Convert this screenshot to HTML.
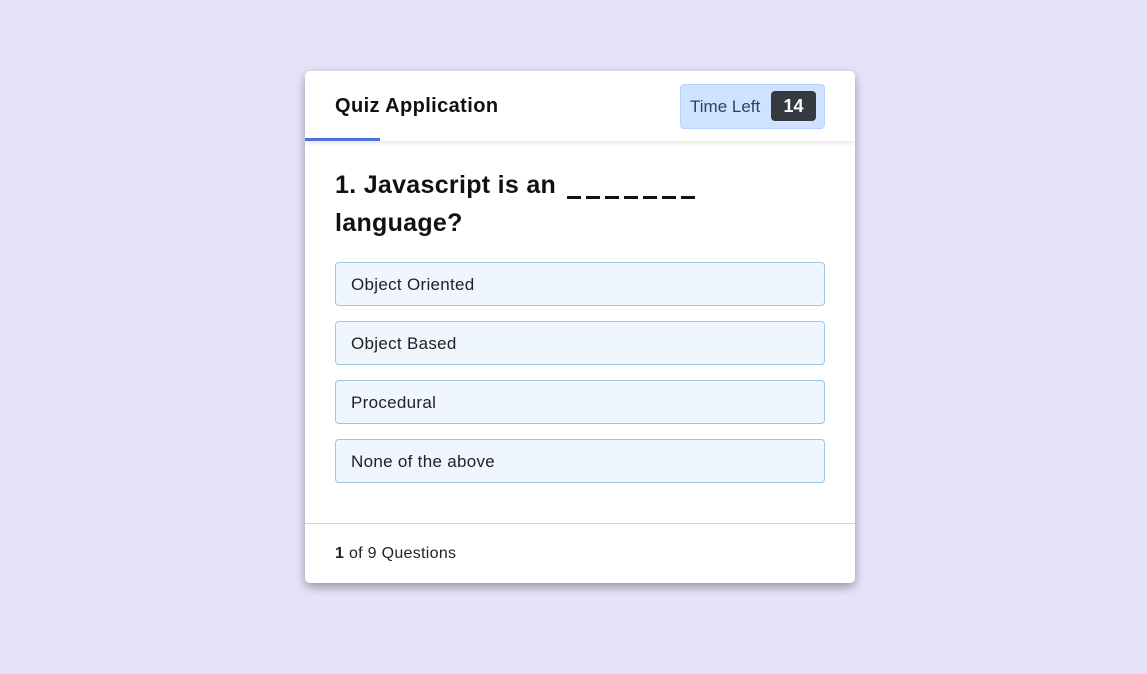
<!DOCTYPE html>
<html><head><style>
*{box-sizing:border-box;margin:0;padding:0}
body{width:1147px;height:674px;background:#e6e3f8;font-family:"Liberation Sans",sans-serif;position:relative;overflow:hidden}
.card{position:absolute;left:305px;top:71px;width:550px;height:512px;background:#fff;border-radius:5px;box-shadow:0 4px 10px rgba(0,0,0,.35);overflow:hidden}
.hdr{position:absolute;left:0;top:0;width:550px;height:70px;background:#fff;box-shadow:0 3px 4px rgba(0,0,0,.08)}
.title{position:absolute;left:30px;top:24px;font-size:20px;font-weight:bold;color:#111;letter-spacing:.4px}
.bar{position:absolute;left:0;top:67px;width:75px;height:3px;background:#4a72d8}
.time{position:absolute;left:375px;top:13px;width:145px;height:45px;background:#cfe2ff;border:1px solid #b6d4fe;border-radius:4px}
.time span{position:absolute;left:9px;top:12px;font-size:17px;color:#2e3f6e}
.badge{position:absolute;left:90px;top:6px;width:45px;height:30px;background:#343a40;border-radius:4px;color:#fff;font-size:18px;font-weight:bold;text-align:center;line-height:30px}
.q{position:absolute;left:30px;top:95px;font-size:25px;font-weight:bold;color:#111;line-height:38px;width:480px;letter-spacing:.3px}
.d{position:absolute;top:125px;width:14px;height:3px;background:#111}
.opt{position:absolute;left:30px;width:490px;height:44px;background:#eff6fe;border:1px solid #9ec5e3;border-radius:4px;font-size:17px;color:#222;padding-left:15px;line-height:43px;letter-spacing:.3px}
.ft{position:absolute;left:0;top:452px;width:550px;border-top:1px solid #d6d6d6}
.fttxt{position:absolute;left:30px;top:474px;font-size:16px;color:#222;letter-spacing:.3px}
</style></head><body>
<div class="card">
<div class="hdr"><div class="title">Quiz Application</div><div class="bar"></div>
<div class="time"><span>Time Left</span><div class="badge">14</div></div></div>
<div class="q">1. Javascript is an<br>language?</div>
<div class="d" style="left:262px"></div><div class="d" style="left:281px"></div><div class="d" style="left:300px"></div><div class="d" style="left:319px"></div><div class="d" style="left:338px"></div><div class="d" style="left:357px"></div><div class="d" style="left:376px"></div>
<div class="opt" style="top:191px">Object Oriented</div>
<div class="opt" style="top:250px">Object Based</div>
<div class="opt" style="top:309px">Procedural</div>
<div class="opt" style="top:368px">None of the above</div>
<div class="ft"></div>
<div class="fttxt"><b>1</b> of 9 Questions</div>
</div>
</body></html>
